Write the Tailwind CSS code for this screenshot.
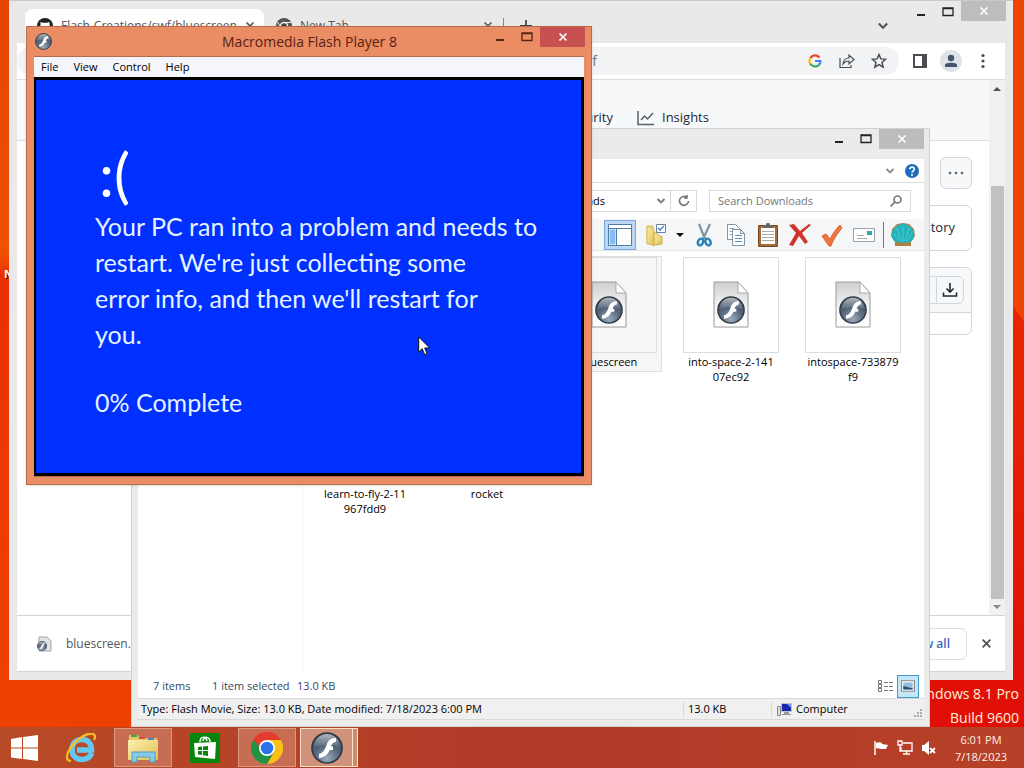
<!DOCTYPE html>
<html lang="en">

<head>
    <meta charset="UTF-8">
    <meta name="viewport" content="width=device-width, initial-scale=1.0">
    <title>Macromedia Flash Player 8</title>
    <script src="https://cdn.jsdelivr.net/npm/@tailwindcss/browser@4"></script>
</head>

<body class="h-screen overflow-hidden font-['Segoe_UI','Open_Sans',sans-serif] text-[11px] text-black">
    <!-- Shared gradients and symbols -->
    <svg class="absolute w-0 h-0" aria-hidden="true" focusable="false">
        <defs>
            <radialGradient id="ball" cx="50%" cy="85%" r="85%">
                <stop offset="0" stop-color="#9aabbd" />
                <stop offset=".5" stop-color="#56677c" />
                <stop offset="1" stop-color="#3a4757" />
            </radialGradient>
            <linearGradient id="gloss" x1="0" y1="0" x2="0" y2="1">
                <stop offset="0" stop-color="#fff" stop-opacity=".6" />
                <stop offset="1" stop-color="#fff" stop-opacity=".05" />
            </linearGradient>
            <linearGradient id="paper" x1="0" y1="0" x2="0" y2="1">
                <stop offset="0" stop-color="#cfcfcf" />
                <stop offset=".6" stop-color="#f7f7f7" />
                <stop offset="1" stop-color="#fff" />
            </linearGradient>
            <linearGradient id="folder" x1="0" y1="0" x2="1" y2="1">
                <stop offset="0" stop-color="#fbf0b0" />
                <stop offset="1" stop-color="#dfbf52" />
            </linearGradient>
        </defs>
        <symbol id="flash" viewBox="0 0 32 32">
            <circle cx="16" cy="16" r="15" fill="url(#ball)" stroke="#2e3844" stroke-width="1.6" />
            <path d="M3 15a13 13 0 0 1 26 0c-8-3-18-3-26 0z" fill="url(#gloss)" />
            <path d="M25 6c-6 0-8 3-9.500 7-2 5.500-3.500 8-7.500 9v4c6-.5 9-4 10.700-8H22v-3.500h-2c1-3 2.500-4.500 5-4.700z" fill="#fff" />
        </symbol>
        <symbol id="swf" viewBox="0 0 36 48">
            <path d="M1 1h24l10 11v34H1z" fill="url(#paper)" stroke="#9a9a9a" />
            <path d="M25 1v11h10z" fill="#fff" stroke="#aaa" />
            <use href="#flash" x="4" y="15" width="28" height="28" />
        </symbol>
        <symbol id="minimize" viewBox="0 0 12 10">
            <path d="M2 8h8" stroke="currentColor" stroke-width="2" />
        </symbol>
        <symbol id="maximize" viewBox="0 0 12 10">
            <path d="M1 1h10v7.500H1zM1 1.500h10" fill="none" stroke="currentColor" stroke-width="1.300" />
        </symbol>
        <symbol id="cross" viewBox="0 0 10 10">
            <path d="M1.500 1.500l7 7M8.500 1.500l-7 7" fill="none" stroke="currentColor" stroke-width="1.700" />
        </symbol>
        <symbol id="chevron" viewBox="0 0 10 10">
            <path d="M1.500 3L5 6.500 8.500 3" fill="none" stroke="currentColor" stroke-width="1.800" />
        </symbol>
    </svg>

    <div class="relative flex flex-col h-full bg-[#ea4300] overflow-hidden">
        <!-- Wallpaper -->
        <svg class="absolute inset-0 w-full h-full" viewBox="0 0 1024 768" preserveAspectRatio="none" aria-hidden="true">
            <linearGradient id="wall" x1="0" y1="0" x2="0" y2="1">
                <stop offset="0" stop-color="#e74300" />
                <stop offset=".33" stop-color="#f05000" />
                <stop offset=".36" stop-color="#e83000" />
                <stop offset=".65" stop-color="#ee3a00" />
                <stop offset="1" stop-color="#ec4200" />
            </linearGradient>
            <linearGradient id="wallRight" x1="0" y1="0" x2="0" y2="1">
                <stop offset="0" stop-color="#e92600" />
                <stop offset="1" stop-color="#df0c08" />
            </linearGradient>
            <path d="M0 0h1024v768H0z" fill="url(#wall)" />
            <path d="M700 0h324v768H700z" fill="#ef4400" />
            <path d="M1012 305l12 16v447H700z" fill="url(#wallRight)" />
        </svg>

        <main class="relative grow">
            <span class="absolute left-1 top-[266px] w-8 text-white font-bold [text-shadow:1px_1px_1px_black]">N</span>
            <p class="absolute right-[5px] top-[682px] text-right text-sm leading-6 text-[#fff0dc]">Windows 8.1 Pro<br>Build 9600</p>

            <!-- Browser window -->
            <section class="absolute left-[9px] right-[11px] top-0 h-[680px] flex flex-col bg-[#e9e9e9] border-t border-[#c9c9c9] px-2 pb-2">
                <header class="flex justify-between h-[42px] shrink-0 text-[#555]">
                    <div class="flex pl-2 pt-2 text-xs">
                        <div class="flex items-center w-[239px] px-3 gap-2 bg-white rounded-t-lg">
                            <svg class="w-4 h-4 shrink-0" viewBox="0 0 16 16">
                                <circle cx="8" cy="8" r="8" fill="#222" />
                                <path d="M3.500 7V4l2 .8h5l2-.8v3c2 4-1 6-4.500 6s-6.500-2-4.500-6z" fill="#fff" />
                            </svg>
                            <span class="grow whitespace-nowrap">Flash-Creations/swf/bluescreen</span>
                            <svg class="w-[10px] h-[10px] shrink-0"><use href="#cross" /></svg>
                        </div>
                        <div class="flex items-center w-[239px] pl-3 pr-[10px] gap-2">
                            <svg class="w-4 h-4" viewBox="0 0 16 16">
                                <circle cx="8" cy="8" r="8" fill="#555" />
                                <circle cx="8" cy="8" r="3.500" fill="#444" stroke="#eee" stroke-width="1.500" />
                                <path d="M8 4.500h7M5 10L1.500 4" stroke="#eee" />
                            </svg>
                            <span class="grow">New Tab</span>
                            <svg class="w-[10px] h-[10px]"><use href="#cross" /></svg>
                        </div>
                        <div class="flex items-center gap-4">
                            <span class="w-px h-4 bg-[#888]"></span>
                            <svg class="w-3 h-3" viewBox="0 0 12 12"><path d="M6 0v12M0 6h12" stroke="#444" stroke-width="1.800" /></svg>
                        </div>
                    </div>
                    <div class="flex items-start -mr-px text-[#222]">
                        <svg class="w-3 h-3 mt-[19px] mr-[18px] text-[#555]"><use href="#chevron" /></svg>
                        <button class="w-[27px] h-[21px] grid place-items-center" aria-label="Minimize"><svg class="w-3 h-[10px]"><use href="#minimize" /></svg></button>
                        <button class="w-[27px] h-[21px] grid place-items-center" aria-label="Maximize"><svg class="w-3 h-[10px]"><use href="#maximize" /></svg></button>
                        <button class="w-[45px] h-5 grid place-items-center bg-[#bdbdbd] text-white" aria-label="Close"><svg class="w-[10px] h-[10px]"><use href="#cross" /></svg></button>
                    </div>
                </header>

                <!-- Address bar -->
                <div class="flex items-center justify-end h-[37px] shrink-0 bg-white border-b border-[#dadce0] text-[#4a4d51]">
                    <div class="flex items-center grow h-7 pr-3 gap-4 bg-[#f1f3f4] rounded-full">
                        <span class="w-[580px] text-right text-sm text-[#777]">bluescreen.swf</span>
                        <span class="grow"></span>
                        <svg class="w-4 h-4 p-px" viewBox="0 0 16 16" fill="none" stroke-width="2.500">
                            <path d="M13 4A6.300 6.300 0 0 0 2.600 4.800" stroke="#ea4335" />
                            <path d="M2.600 4.800a6.300 6.300 0 0 0 0 6.400" stroke="#fbbc05" />
                            <path d="M2.600 11.200A6.300 6.300 0 0 0 12.400 12.500" stroke="#34a853" />
                            <path d="M12.400 12.500A6 6 0 0 0 14.200 8H8" stroke="#4285f4" />
                        </svg>
                        <svg class="w-4 h-4" viewBox="0 0 16 16" fill="none" stroke="currentColor" stroke-width="1.200">
                            <path d="M1 5v9.500h11V12M4 11c.5-4 2.500-6 6-6V2l5 4.500L10 11V8c-3 0-4.500 1-6 3z" />
                        </svg>
                        <svg class="w-4 h-4" viewBox="0 0 16 16" fill="none" stroke="currentColor" stroke-width="1.500">
                            <path d="M8 1.500l1.900 4.400 4.700.4-3.600 3.100 1.100 4.700L8 11.600l-4.100 2.500L5 9.400 1.400 6.300l4.700-.4z" />
                        </svg>
                    </div>
                    <div class="flex items-center gap-[10px] px-[14px]">
                        <svg class="w-[14px] h-[14px]" viewBox="0 0 14 14"><path d="M1 1h12v12H1z" fill="#fff" stroke="currentColor" stroke-width="2" /><path d="M9 1h4v12H9z" fill="currentColor" /></svg>
                        <svg class="w-[22px] h-[22px] mx-[3px]" viewBox="0 0 22 22"><circle cx="11" cy="11" r="11" fill="#dfe2e7" /><circle cx="11" cy="8" r="3.200" fill="#44546a" /><path d="M5 17v-2c0-3 12-3 12 0v2z" fill="#44546a" /></svg>
                        <svg class="w-4 h-4" viewBox="0 0 16 16" fill="currentColor"><circle cx="8" cy="2.500" r="1.600" /><circle cx="8" cy="8" r="1.600" /><circle cx="8" cy="13.500" r="1.600" /></svg>
                    </div>
                </div>

                <div class="flex grow">
                    <div class="grow bg-white text-[#24292f]">
                        <nav class="flex items-center h-[61px] pt-4 gap-6 bg-[#f6f8fa] border-b border-[#d8dee4] text-[13px]">
                            <a href="#" class="w-[596px] text-right">Security</a>
                            <a href="#" class="flex items-center gap-2">
                                <svg class="w-[17px] h-4" viewBox="0 0 17 16" fill="none" stroke="#57606a" stroke-width="1.500"><path d="M1 1v13.500h16M4 10l3.500-4 3 3L16 3" /></svg>
                                Insights
                            </a>
                        </nav>
                        <div class="flex flex-col items-end gap-4 pt-4 pr-[17px]">
                            <button class="grid place-items-center w-8 h-8 bg-[#f6f8fa] border border-[#d0d7de] rounded-md" aria-label="More options">
                                <svg class="w-4 h-1" viewBox="0 0 16 4" fill="#57606a"><circle cx="2" cy="2" r="1.300" /><circle cx="8" cy="2" r="1.300" /><circle cx="14" cy="2" r="1.300" /></svg>
                            </button>
                            <div class="flex items-center justify-end w-[300px] h-[46px] pr-4 border border-[#d0d7de] rounded-md text-[13px]">
                                <a href="#">History</a>
                            </div>
                            <div class="w-[300px] h-[68px] border border-[#d0d7de] rounded-md">
                                <div class="flex items-center justify-end h-[45px] pr-[7px] bg-[#f6f8fa] border-b border-[#d0d7de] rounded-t-md">
                                    <span class="w-9 h-7 border border-r-0 border-[#d0d7de] rounded-l-md"></span>
                                    <button class="grid place-items-center w-7 h-7 border border-[#d0d7de] rounded-r-md" aria-label="Download">
                                        <svg class="w-4 h-4" viewBox="0 0 16 16" fill="none" stroke="#24292f" stroke-width="1.600"><path d="M8 1v9M4.500 6.500L8 10l3.500-3.500M1.500 10.500v3.500h13v-3.500" /></svg>
                                    </button>
                                </div>
                            </div>
                        </div>
                    </div>
                    <div class="flex flex-col items-center w-4 bg-[#f1f1f1] text-[#505050]">
                        <svg class="w-2 h-4 mt-px" viewBox="0 0 8 16"><path d="M0 10l4-4 4 4z" fill="currentColor" /></svg>
                        <span class="w-[13px] grow mt-[89px] bg-[#c1c1c1]"></span>
                        <svg class="w-2 h-4" viewBox="0 0 8 16"><path d="M0 6l4 4 4-4z" fill="#888" /></svg>
                    </div>
                </div>

                <!-- Downloads shelf -->
                <footer class="flex items-center justify-between h-[57px] shrink-0 pl-5 pr-[13px] bg-white border-y border-[#d4d4d4] text-[#555]">
                    <div class="flex items-center gap-[14px] text-xs">
                        <svg class="w-[15px] h-4" viewBox="0 0 15 16"><path d="M2 1h8l4 4v10H2z" fill="#dfe3e8" stroke="#a0a5aa" /><use href="#flash" x="0" y="5" width="10" height="10" /></svg>
                        <span>bluescreen.swf</span>
                    </div>
                    <div class="flex items-center gap-[14px]">
                        <button class="h-8 px-4 border border-[#dadce0] rounded-md text-xs font-semibold text-[#4467b5]">Show all</button>
                        <svg class="w-[11px] h-[11px]"><use href="#cross" /></svg>
                    </div>
                </footer>
            </section>

            <!-- File Explorer window -->
            <section class="absolute left-[131px] w-[799px] top-[128px] h-[599px] flex flex-col pl-[6px] pr-[5px] pb-[6px] bg-[#ebebeb] border border-[#d2d2d2]">
                <header class="flex justify-end h-[30px] shrink-0 text-[#222]">
                    <button class="w-[27px] h-5 grid place-items-center" aria-label="Minimize"><svg class="w-3 h-[10px]"><use href="#minimize" /></svg></button>
                    <button class="w-[27px] h-5 grid place-items-center" aria-label="Maximize"><svg class="w-3 h-[10px]"><use href="#maximize" /></svg></button>
                    <button class="w-[45px] h-5 grid place-items-center bg-[#bcbcbc] text-white" aria-label="Close"><svg class="w-[10px] h-[10px]"><use href="#cross" /></svg></button>
                </header>
                <div class="flex items-center justify-end gap-[10px] h-6 shrink-0 pr-[5px] bg-white border-b border-[#d9dcdf] text-[#8c8c8c]">
                    <svg class="w-[10px] h-[10px]"><use href="#chevron" /></svg>
                    <svg class="w-[14px] h-[14px]" viewBox="0 0 14 14">
                        <circle cx="7" cy="7" r="7" fill="#1e6dbd" />
                        <path d="M4.800 5.300c0-3 4.600-2.800 4.500-.1C9.200 6.800 7 6.900 7 8.700M7 10v1.800" fill="none" stroke="#fff" stroke-width="1.700" />
                    </svg>
                </div>
                <div class="flex items-center justify-end gap-3 h-9 shrink-0 pr-[13px] bg-white text-[#777]">
                    <div class="flex items-center w-[240px] h-[22px] border border-[#d9d9d9]">
                        <span class="w-[147px] text-right text-black">Downloads</span>
                        <svg class="w-[10px] h-[10px] ml-auto mr-1"><use href="#chevron" /></svg>
                        <button class="grid place-items-center w-[26px] h-full border-l border-[#d9d9d9]" aria-label="Refresh">
                            <svg class="w-3 h-3" viewBox="0 0 12 12" fill="none" stroke="currentColor" stroke-width="1.600"><path d="M9 2.500A4.500 4.500 0 1 0 10.500 6M9 0v3H6" /></svg>
                        </button>
                    </div>
                    <label class="flex items-center w-[202px] h-[22px] px-2 border border-[#d9d9d9]">
                        <input type="text" aria-label="Search Downloads" placeholder="Search Downloads" class="grow w-0 outline-none placeholder:text-[#777]">
                        <svg class="w-3 h-3" viewBox="0 0 12 12" fill="none" stroke="currentColor" stroke-width="1.700"><circle cx="7.500" cy="4.500" r="3.500" /><path d="M5 7l-4.500 4.500" /></svg>
                    </label>
                </div>

                <!-- Toolbar -->
                <div class="flex items-center justify-end gap-2 h-8 shrink-0 pr-[9px] bg-[#f5f6f7] border-b border-[#e6e9ec]">
                    <button class="grid place-items-center w-8 h-[30px] bg-[#bcd8f6] border border-[#7aa7dc]" aria-label="Navigation pane">
                        <svg class="w-6 h-[22px]" viewBox="0 0 24 22">
                            <path d="M.5.500h23v21H.5z" fill="#fff" stroke="#4d7fa8" />
                            <path d="M1 4.500h22M8.500 5v16" stroke="#4d7fa8" />
                            <path d="M1.500 5.500h6v15h-6z" fill="#8dbcf0" />
                        </svg>
                    </button>
                    <div class="flex items-center gap-2">
                        <svg class="w-6 h-6" viewBox="0 0 24 24">
                            <path d="M3 3h6v18H3z" fill="url(#folder)" stroke="#d8bd5c" />
                            <path d="M3 3l7 3v17l-7-3z" fill="url(#folder)" stroke="#d8bd5c" />
                            <path d="M10 9l8 5v7l-8 1z" fill="url(#folder)" stroke="#cfae48" />
                            <path d="M12.500 1.500h9v8h-9z" fill="#fff" stroke="#6681a0" />
                            <path d="M14 5l2 2 4-4" fill="none" stroke="#3a7ac0" stroke-width="1.300" />
                        </svg>
                        <svg class="w-2 h-1" viewBox="0 0 8 4"><path d="M0 0h8L4 4z" fill="#111" /></svg>
                    </div>
                    <svg class="w-6 h-6" viewBox="0 0 24 24" fill="none">
                        <path d="M7 1l6 15M18 1l-7 15" stroke="#7e93a3" stroke-width="2.200" />
                        <ellipse cx="8.500" cy="19" rx="2.500" ry="3.500" transform="rotate(25 8.500 19)" stroke="#2a83bb" stroke-width="2.500" />
                        <ellipse cx="16" cy="19" rx="2.500" ry="3.500" transform="rotate(-25 16 19)" stroke="#2a83bb" stroke-width="2.500" />
                    </svg>
                    <svg class="w-6 h-6" viewBox="0 0 24 24" fill="#fff" stroke="#8394a3">
                        <path d="M3.500 1.500h8l4 4v11h-12z" />
                        <path d="M5.500 5.500h5M5.500 8.500h3M5.500 11.500h3" stroke="#8aaed0" />
                        <path d="M8.500 6.500h8l4 4v12h-12zM16.500 6.500v4h4" />
                        <path d="M11 12.500h7M11 15.500h7M11 18.500h7" stroke="#5890c0" />
                    </svg>
                    <svg class="w-6 h-6" viewBox="0 0 24 24">
                        <path d="M2.500 2.500h19v21h-19z" fill="#a56d3d" stroke="#754820" />
                        <path d="M5 5h14v16H5z" fill="#fff" />
                        <path d="M6 8.500h12M6 11.500h12M6 14.500h12M6 17.500h12" stroke="#aaa" />
                        <path d="M8 5V2h2c0-3 4-3 4 0h2v3z" fill="#666" />
                    </svg>
                    <svg class="w-6 h-6" viewBox="0 0 24 24" fill="#cf3528"><path d="M1 2l5-1 6 7 9-7 2 1-9 8 6 9-3 2-6-8-6 10-4-1 7-12z" /></svg>
                    <svg class="w-6 h-6" viewBox="0 0 24 24"><path d="M2 13l4-2 4 5c3-6 6-10 10-14l2 3c-4 5-8 10-11 18H9z" fill="#ed7744" stroke="#df652f" /></svg>
                    <svg class="w-6 h-6" viewBox="0 0 24 24">
                        <path d="M1.500 5.500h21v13h-21z" fill="#fff" stroke="#98a5ae" />
                        <path d="M15 8h5v4h-5z" fill="#35a5ae" />
                        <path d="M5 12.500h7M5 15.500h10" stroke="#aaa" />
                    </svg>
                    <span class="w-px h-[26px] -mx-px bg-[#777]"></span>
                    <svg class="w-6 h-6" viewBox="0 0 24 24">
                        <path d="M0 13l4 6v4h16v-4l4-6-1-7-5-5-6-1-6 1-5 5z" fill="#b0803e" />
                        <path d="M5 19C0 17 0 10 2 7c1-3 4-3 5-5 3 0 4-2 5-2s2 2 5 2c1 2 4 2 5 5 2 3 2 10-3 12l-7 1z" fill="#22b3bd" />
                        <path d="M10 18L6 5M12 19V3M14 18l4-13M8 18L3 10M16 18l5-8" stroke="#5ed0d3" stroke-width=".8" />
                    </svg>
                </div>

                <!-- File list -->
                <div class="flex grow min-h-0 bg-white text-center leading-[15px]">
                    <div class="w-[166px] shrink-0 border-r border-[#fafafa]"></div>
                    <ul class="grid grid-cols-[repeat(5,122px)] auto-rows-[132px] content-start pt-[5px]">
                        <li class="col-start-3 px-2">
                            <div class="bg-[#f6f6f6] border border-[#dedede] h-[116px] w-[106px]">
                                <div class="grid place-items-center mx-auto w-24 h-24 border border-[#ddd]"><svg class="w-9 h-12"><use href="#swf" /></svg></div>
                                <p class="pt-px">bluescreen</p>
                            </div>
                        </li>
                        <li class="px-[13px] pt-px">
                            <div class="grid place-items-center w-24 h-24 border border-[#ddd]"><svg class="w-9 h-12"><use href="#swf" /></svg></div>
                            <p class="pt-px">into-space-2-141<br>07ec92</p>
                        </li>
                        <li class="px-[13px] pt-px">
                            <div class="grid place-items-center w-24 h-24 border border-[#ddd]"><svg class="w-9 h-12"><use href="#swf" /></svg></div>
                            <p class="pt-px">intospace-733879<br>f9</p>
                        </li>
                        <li class="col-start-1 px-[13px] pt-px">
                            <div class="grid place-items-center w-24 h-24 border border-[#ddd]"><svg class="w-9 h-12"><use href="#swf" /></svg></div>
                            <p class="pt-px">learn-to-fly-2-11<br>967fdd9</p>
                        </li>
                        <li class="px-[13px] pt-px">
                            <div class="grid place-items-center w-24 h-24 border border-[#ddd]"><svg class="w-9 h-12"><use href="#swf" /></svg></div>
                            <p class="pt-px">rocket</p>
                        </li>
                    </ul>
                </div>

                <div class="flex items-center h-6 shrink-0 pl-[15px] pr-[5px] bg-white text-[#374760]">
                    <span class="w-[59px]">7 items</span>
                    <span class="w-[85px]">1 item selected</span>
                    <span>13.0 KB</span>
                    <svg class="w-4 h-3 ml-auto" viewBox="0 0 16 12" stroke="#777" fill="none"><path d="M.5.500h3v3h-3zM.5 4.500h3v3h-3zM.5 8.500h3v3h-3z" /><path d="M6 2.500h10M6 6.500h10M6 10.500h10" stroke-dasharray="4 1" /></svg>
                    <button class="grid place-items-center w-[22px] h-[23px] ml-[3px] bg-[#c3e7f8] border border-[#3f9bc8]" aria-label="Large icons">
                        <svg class="w-[14px] h-3" viewBox="0 0 12 10"><path d="M.5.500h11v9H.5z" fill="#fff" stroke="#888" /><path d="M2 2h8v6H2z" fill="#8fbcda" /><path d="M2 8V5l4 1 4 1v1z" fill="#24506e" /></svg>
                    </button>
                </div>
                <footer class="flex items-center h-[22px] shrink-0 bg-[#f0f0f0] border-y border-[#d9d9d9]">
                    <span class="pl-[3px] grow">Type: Flash Movie, Size: 13.0 KB, Date modified: 7/18/2023 6:00 PM</span>
                    <span class="w-[88px] pl-1 border-l border-[#d9d9d9]">13.0 KB</span>
                    <div class="flex items-center gap-1 w-[153px] pl-[5px] border-l border-[#d9d9d9]">
                        <svg class="w-[15px] h-[14px]" viewBox="0 0 15 14"><path d="M.5 4.500h3v9h-3z" fill="#ddd" stroke="#888" /><path d="M4 1h11v9H4z" fill="#bcc3d0" /><path d="M5 2h9v7H5z" fill="#1528ae" /><path d="M10 2h4v4z" fill="#7c95ea" /><path d="M7 10h5v2h2v1H5v-1h2z" fill="#999" /></svg>
                        <span>Computer</span>
                        <svg class="w-2 h-2 ml-auto mr-[2px] self-end" viewBox="0 0 8 8" fill="#aaa"><path d="M6 0h2v2H6zM3 3h2v2H3zM6 3h2v2H6zM0 6h2v2H0zM3 6h2v2H3zM6 6h2v2H6z" /></svg>
                    </div>
                </footer>
            </section>

            <!-- Flash Player window -->
            <section class="absolute left-[26px] w-[566px] top-[26px] h-[459px] flex flex-col px-[7px] pb-[7px] bg-[#ea8c64] border border-[#b86a4c] shadow">
                <header class="grid grid-cols-[1fr_auto_1fr] h-[29px] shrink-0 -mr-px text-[#582312]">
                    <svg class="w-[17px] h-[17px] mt-[6px] ml-px"><use href="#flash" /></svg>
                    <h1 class="pt-1 text-sm leading-[22px]">Macromedia Flash Player 8</h1>
                    <div class="flex justify-end">
                        <button class="w-[27px] h-5 grid place-items-center" aria-label="Minimize"><svg class="w-3 h-[10px]"><use href="#minimize" /></svg></button>
                        <button class="w-[27px] h-5 grid place-items-center" aria-label="Maximize"><svg class="w-3 h-[10px]"><use href="#maximize" /></svg></button>
                        <button class="w-[45px] h-5 grid place-items-center bg-[#c75050] text-white" aria-label="Close"><svg class="w-[10px] h-[10px]"><use href="#cross" /></svg></button>
                    </div>
                </header>
                <div class="flex flex-col grow border-y border-[#b86a4c]">
                    <nav class="flex items-center h-5 shrink-0 px-[7px] gap-[15px] bg-[#f5f6fb]">
                        <button>File</button>
                        <button>View</button>
                        <button>Control</button>
                        <button>Help</button>
                    </nav>
                    <div class="grow pl-[59px] pt-[60px] bg-[#0030ff] border-y-[3px] border-l-2 border-r-[3px] border-black font-['Comic_Sans_MS','Lato',sans-serif] text-[25px] text-[#e6f2ff]">
                        <p class="pl-1 text-[60px] leading-[68px] text-white">:(</p>
                        <p class="leading-9">Your PC ran into a problem and needs to<br>restart. We're just collecting some<br>error info, and then we'll restart for<br>you.</p>
                        <p class="pt-8 leading-9">0% Complete</p>
                    </div>
                </div>
            </section>

            <svg class="absolute left-[418px] top-[336px] w-3 h-5" viewBox="0 0 12 20"><path d="M.700 1v15l3.500-3.300 2.500 6 2.500-1-2.500-5.700h5z" fill="#fff" stroke="#111" /></svg>
        </main>

        <!-- Taskbar -->
        <footer class="relative flex justify-between h-[41px] shrink-0 bg-linear-to-r from-[#b84b27] via-[#b13a28] to-[#b74028] text-[#fff0e4]">
            <div class="flex gap-1">
                <button class="grid place-items-center w-[48px]" aria-label="Start">
                    <svg class="w-[27px] h-[26px]" viewBox="0 0 27 26" fill="#fff"><path d="M0 4l11-2v10.500H0zM12 2l15-2v12.500H12zM0 13.500h11V24L0 22.500zM12 13.500h15V26l-15-2z" /></svg>
                </button>
                <button class="grid place-items-center w-[58px]" aria-label="Internet Explorer">
                    <svg class="w-[30px] h-[30px]" viewBox="0 0 30 30" fill="none">
                        <path d="M26 20c-2 4-5 6.500-10 6.500-6 0-10-4-10-10S10 6.500 16 6.500c6 0 9.500 4 9.500 10.500H11" stroke="#63c9f3" stroke-width="5.500" />
                        <path d="M5 28C-1 28 0 21 6 13 12 5 22-1 27 1c3 1 2 4 1 6" stroke="#f9bd24" stroke-width="2.200" />
                    </svg>
                </button>
                <button class="grid place-items-center w-[58px] my-px bg-[#c66d53] border border-[#dd987e]" aria-label="File Explorer">
                    <svg class="w-8 h-[30px]" viewBox="0 0 32 30">
                        <path d="M2 2h9l2 3h17v21H2z" fill="#e5c566" />
                        <path d="M4 2h6v2H4z" fill="#48a44d" /><path d="M12 4h6v2h-6z" fill="#d84f3d" /><path d="M21 5h6v2h-6z" fill="#4f86b7" />
                        <path d="M1 7h30v20H1z" fill="url(#folder)" />
                        <path d="M5 29V19h23v10h-5v-5H10v5z" fill="#86c9e8" stroke="#509fc5" />
                    </svg>
                </button>
                <button class="grid place-items-center w-[58px]" aria-label="Store">
                    <svg class="w-[30px] h-[30px]" viewBox="0 0 30 30">
                        <path d="M0 0h30v30H0z" fill="#07860b" />
                        <path d="M10 9c0-6 6-6 7-1M13 8c1-6 7-4 7 1" fill="none" stroke="#fff" stroke-width="1.500" />
                        <path d="M4 10l22-1-1 17-20-2z" fill="#fff" />
                        <path d="M8 14l4-.5V17H8zM13 13.500l5-.5v4h-5zM8 18h4v4l-4-.5zM13 18h5v5l-5-.8z" fill="#07860b" />
                    </svg>
                </button>
                <button class="grid place-items-center w-[58px] my-px bg-[#c66d53] border border-[#dd987e]" aria-label="Google Chrome">
                    <svg class="w-8 h-8" viewBox="0 0 32 32">
                        <path d="M16 16L2.100 8A16 16 0 0 1 29.900 8z" fill="#e33b2e" />
                        <path d="M16 16v16A16 16 0 0 1 2.100 8z" fill="#229342" />
                        <path d="M2.600 8H30H16l-7 8z" fill="#e33b2e" />
                        <path d="M23 20l-7 12A16 16 0 0 0 29.900 8H16z" fill="#fbc116" />
                        <path d="M9 20L2.100 8 16 8zM9 20l7 12 7-12z" fill="#229342" />
                        <path d="M16 8H2.100L9 16z" fill="#e33b2e" />
                        <path d="M2.100 8L9 20v-5z" fill="#229342" />
                        <circle cx="16" cy="16" r="8" fill="#fff" /><circle cx="16" cy="16" r="6.300" fill="#2c72e8" />
                    </svg>
                </button>
                <button class="flex w-[58px] my-px" aria-label="Flash Player">
                    <span class="grid place-items-center w-[53px] h-full bg-[#d0927b] border border-[#ffe3c5]"><svg class="w-8 h-8"><use href="#flash" /></svg></span>
                    <span class="w-[5px] h-full bg-[#cc8a70] border-y border-r border-[#ffe3c5]"></span>
                </button>
            </div>
            <div class="flex items-center gap-2 pr-[11px]">
                <svg class="w-4 h-4" viewBox="0 0 16 16"><path d="M2 1v14" stroke="#fff" stroke-width="1.500" /><path d="M3 3c2-1 4-1 6 0v1l6 1-2 4H8L3 8z" fill="#fff" /></svg>
                <svg class="w-4 h-4" viewBox="0 0 16 16" fill="none" stroke="#fff" stroke-width="1.300"><path d="M6 3h9v8H4V7M6 14h7M9.500 11v3M1 1h4v4H1zM3 5v6h2" /></svg>
                <svg class="w-4 h-4" viewBox="0 0 16 16"><path d="M1 5h2l5-4v14l-5-4H1z" fill="#fff" /><path d="M9 8l5 5M14 8l-5 5" stroke="#fff" stroke-width="1.800" /></svg>
                <time class="w-16 ml-1 text-center leading-[17px]">6:01 PM<br>7/18/2023</time>
            </div>
        </footer>
    </div>
</body>

</html>
